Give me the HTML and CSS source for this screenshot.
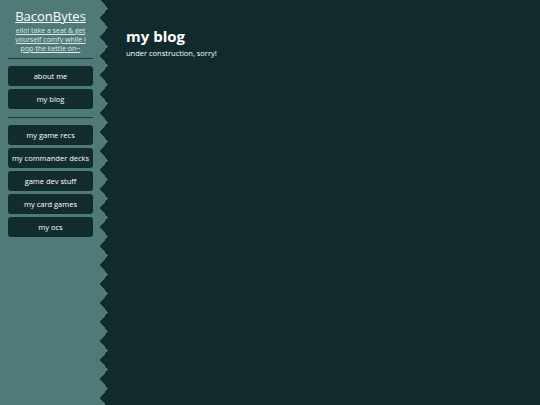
FILE: index.html
```html
<!DOCTYPE html>
<html>
<head>
<meta charset="utf-8">
<link rel="stylesheet" href="styles.css">
</head>
<body>
<div class="layout">
  <aside class="sidebar">
    <nav class="nav">
      <header class="brand">
        <a class="title" href="#">BaconBytes</a>
        <a class="tagline" href="#">ello! take a seat &amp; get yourself comfy while i pop the kettle on~</a>
      </header>
      <hr class="divider">
      <a class="btn" href="#">about me</a>
      <a class="btn" href="#">my blog</a>
      <hr class="divider">
      <a class="btn" href="#">my game recs</a>
      <a class="btn" href="#">my commander decks</a>
      <a class="btn" href="#">game dev stuff</a>
      <a class="btn" href="#">my card games</a>
      <a class="btn" href="#">my ocs</a>
    </nav>
    <div class="zigzag"></div>
  </aside>
  <main class="content">
    <h1 class="heading">my blog</h1>
    <p class="note">under construction, sorry!</p>
  </main>
</div>
</body>
</html>
```
FILE: styles.css
```css
html, body {
  margin: 0;
  padding: 0;
  height: 100%;
  background: #112b2d;
}
body {
  font-family: "Open Sans", "DejaVu Sans", sans-serif;
  color: #ffffff;
}
.layout {
  display: flex;
  height: 405px;
}
.sidebar {
  display: flex;
  width: 108px;
  flex-shrink: 0;
}
.nav {
  width: 100px;
  background: #4f7a78;
  display: flex;
  flex-direction: column;
  align-items: stretch;
  padding: 0 7px 0 8px;
  box-sizing: border-box;
}
.zigzag {
  width: 8px;
  background: conic-gradient(from 220.1deg at 100% 50%, #4f7a78 0deg 99.8deg, #112b2d 99.8deg 360deg);
  background-size: 8px 19px;
  background-position: 0 -1px;
}
.brand {
  display: flex;
  flex-direction: column;
  align-items: center;
  text-align: center;
  padding-top: 7px;
}
.title {
  color: #ffffff;
  font-size: 13px;
  line-height: 18px;
  text-decoration: underline;
  text-decoration-thickness: 1px;
}
.tagline {
  color: #dfe9e8;
  font-size: 7px;
  line-height: 9px;
  text-decoration: underline;
  margin-top: 1px;
}
.divider {
  border: 0;
  height: 1px;
  background: #1b3a3a;
  margin: 5px 0 7px 0;
  width: 100%;
}
.btn {
  display: block;
  height: 20px;
  line-height: 20px;
  margin-bottom: 3px;
  background: #132d2f;
  border-radius: 3px;
  color: #ffffff;
  font-size: 7.5px;
  text-align: center;
  text-decoration: none;
}
.content {
  flex: 1;
  padding: 26px 0 0 18px;
}
.heading {
  margin: 0;
  font-size: 15px;
  line-height: 20px;
  font-weight: bold;
}
.note {
  margin: 2px 0 0 0;
  font-size: 7.5px;
  line-height: 10px;
}
```
